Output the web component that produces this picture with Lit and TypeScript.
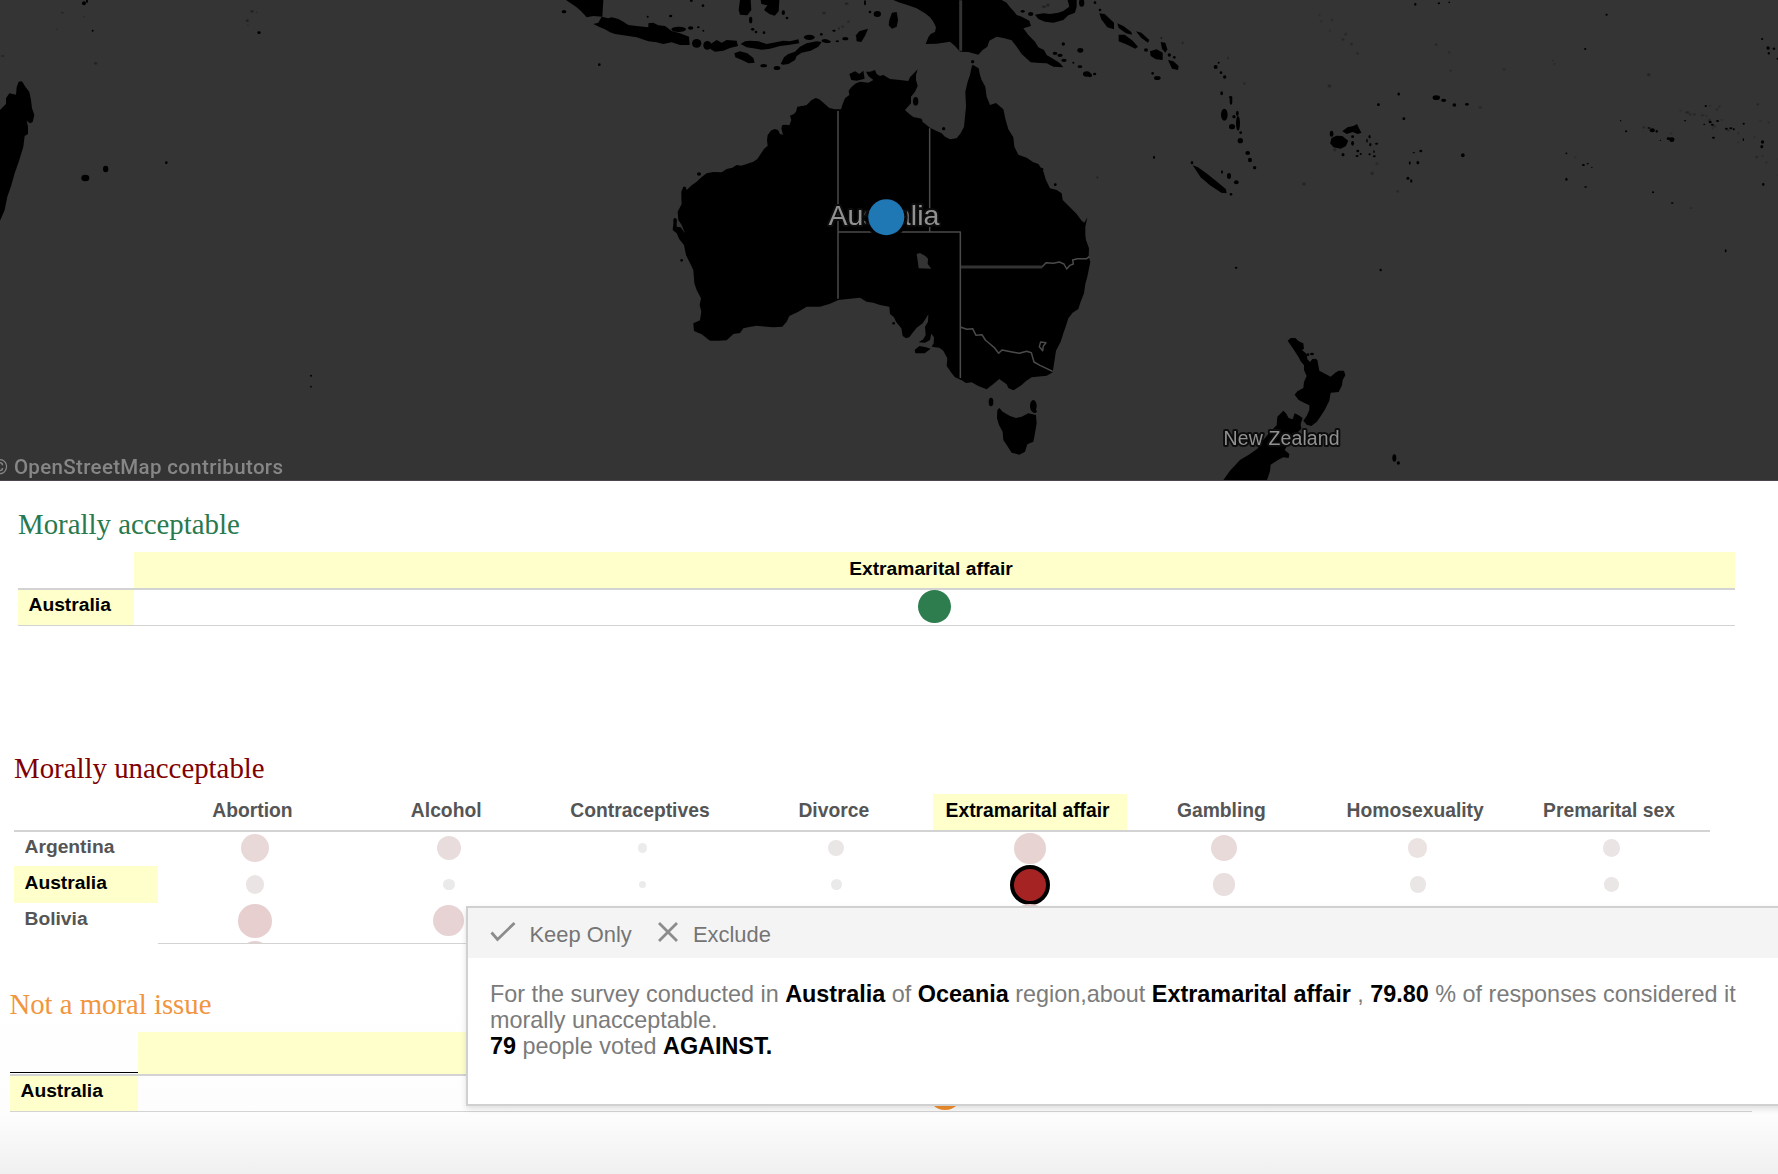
import { LitElement, html, svg, css } from "lit";
import { customElement, property } from "lit/decorators.js";
import { classMap } from "lit/directives/class-map.js";
import { styleMap } from "lit/directives/style-map.js";

/** A run of outline points written relative to its own origin. */
type Run = [dx: number, dy: number, points: string];

/** Joins several runs of points into one closed outline. */
function outline(...runs: Run[]): string {
  const all = runs.flatMap(([dx, dy, points]) =>
    points.split(" ").map((p) => {
      const [x, y] = p.split(",").map(Number);
      return `${x + dx},${y + dy}`;
    })
  );
  return `M${all.join("L")}Z`;
}

/** Islands as "x,y,rx,ry" groups; ry defaults to rx. */
function islands(list: string) {
  return list.split(" ").map((item) => {
    const [x, y, rx, ry = rx] = item.split(",").map(Number);
    return svg`<ellipse cx=${x} cy=${y} rx=${rx} ry=${ry}></ellipse>`;
  });
}

const AUSTRALIA = outline(
  [0, 0,
    "424,575 430,560 437,560 440,570 455,556 470,545 486,530 500,520 520,516 545,517 560,507 577,503 590,495 604,497 640,485 652,477 660,465 672,447 683,437 681,420 683,405 694,391 705,387 714,390 720,402 729,404 724,385 727,375 738,374 748,376 754,360 750,347 762,342 768,335 772,320 785,319 800,315 815,300 827,294 838,298 850,308 868,324 885,328 903,328 908,312 915,295 928,285 926,272 935,260 948,250 960,245 985,248 1000,240 985,228 978,215 990,215 1005,210 1010,222 1020,228 1030,225 1050,237 1080,240 1105,243 1110,232 1133,208 1128,225 1128,240 1133,258 1125,275 1113,290 1113,310 1095,330 1108,342 1120,351 1145,356 1148,366 1170,383"],
  [1080, 0,
    "105,391 125,400 135,410 150,418 170,415 182,400 192,380 195,350 198,320 196,275 203,245 210,225 215,200 218,194 236,205 240,225 245,240 256,260 260,290 270,315 288,309 310,328 317,360 325,388 340,412 343,440 355,464 380,473 400,487 415,492 430,514 437,538 450,565 470,570 485,580 488,600 510,622 530,642 545,662 553,668 562,652 556,680 556,705"],
  [360, 540,
    "1278,180 1287,205 1286,230 1291,245 1282,290 1276,312 1272,340 1262,365 1255,387 1238,398 1225,415 1217,440 1210,460 1202,485 1188,512 1183,545 1178,577 1160,587 1115,592 1098,603 1085,615 1068,626 1060,631 1045,624 1040,613 1027,604 1018,597 1000,612 980,628 955,618 935,607 918,609 905,601 885,592 875,580 860,558 862,535 850,512 838,503 815,500 821,490 822,472 814,461 810,480 795,488 776,487 790,478 797,465 795,440 804,425 805,403 796,418 788,430 770,443 755,462 748,472 738,475 728,468 724,445 708,425 702,412 690,402 688,380 660,375 640,368 620,365 600,353 570,356 535,360 510,371 480,380 440,380 415,395 388,408 380,425 367,440 340,442 320,440 290,437 268,441 250,445 240,459 220,462 200,481 175,482 150,482 125,463 102,453 100,430 120,421 124,395 119,375 123,355 110,330 103,310 100,270 88,245 78,225 72,195 58,178 50,160 38,150 42,115 50,118 50,140 62,142 75,160 65,135 55,120 53,95 65,72 64,50"]
);

const PAPUA = outline([1080, 0,
  "-20,0 0,8 20,14 50,25 75,40 90,52 100,65 108,82 105,96 92,102 85,112 77,132 110,131 150,125 165,138 180,155 205,156 235,164 248,150 262,140 268,122 290,110 310,114 335,121 350,140 365,162 392,187 420,189 440,190 460,200 490,202 480,190 465,180 440,165 432,150 415,142 405,125 385,105 370,85 393,78 388,62 365,50 350,45 340,32 330,22 320,8 305,0"]);

const NEW_BRITAIN = outline([1080, 0,
  "405,44 430,40 450,42 475,38 490,33 508,20 503,0 530,0 530,20 525,38 505,46 490,60 460,68 435,65 415,57"]);

const JAVA = outline([0, 0,
  "160,72 175,68 185,50 205,55 215,52 235,57 250,65 265,75 290,78 325,82 325,70 340,68 355,76 375,78 395,93 420,100 447,110 449,135 420,135 395,127 370,132 350,127 325,124 290,112 265,108 225,102 210,97 195,88 180,82"]);

const SUMATRA = outline([0, 0, "78,0 190,0 187,50 160,48 140,52 125,35 110,22"]);

const FLORES = outline([0, 0,
  "602,132 615,124 630,122 655,124 680,132 700,128 730,122 750,124 775,118 778,130 745,135 720,138 690,146 665,149 640,145 620,142"]);

const TIMOR = outline([0, 0,
  "722,192 732,172 745,162 765,155 780,140 800,130 830,124 845,126 835,140 812,152 785,158 770,168 765,180 745,192 730,194"]);

const SUMBAWA = outline([0, 0,
  "511,133 530,120 545,128 560,120 590,122 594,138 570,144 550,152 525,155 511,147"]);

const TASMANIA = outline([360, 540,
  "1012,690 1018,684 1028,695 1050,708 1068,714 1085,710 1105,700 1128,705 1130,730 1124,765 1120,785 1102,793 1095,815 1078,824 1055,818 1042,798 1030,780 1028,755 1017,735 1011,715"]);

const NORTH_ISLAND =
  "M413,122L422,114L436,114L446,124L460,130L462,146L456,150L470,162L472,178L480,186L488,176L502,180L508,212L522,220L542,230L556,218L566,212L582,212L586,226L578,240L576,256L566,276L542,278L538,302L524,330L510,352L500,366L484,378L470,374L460,362L470,348L478,330L478,316L462,308L446,300L434,284L442,274L460,264L462,246L470,228L462,210L462,196L452,184L446,172L432,150Z";
const SOUTH_ISLAND =
  "M218,543L240,512L270,480L300,462L322,446L340,420L360,396L380,376L382,350L400,332L408,340L416,354L428,358L434,340L446,346L458,354L452,372L454,386L440,400L424,410L416,430L404,450L418,462L416,474L400,472L384,480L362,494L360,514L350,543Z";

const MADAGASCAR =
  "M0,330L18,312L18,295L28,280L48,284L50,262L56,245L66,244L76,260L88,276L93,300L96,325L103,345L98,366L90,370L80,362L84,380L84,402L74,408L70,440L56,486L44,520L34,556L22,590L14,630L0,662Z";

@customElement("region-map")
class RegionMap extends LitElement {
  static styles = css`
    :host {
      display: block;
      height: 481px;
      background: #343434;
    }
    .map {
      display: block;
      width: 1778px;
      height: 481px;
    }
    .land {
      fill: #000;
    }
    .faint {
      fill: #1a1a1a;
      opacity: 0.75;
    }
    .water {
      fill: #343434;
    }
    .line {
      fill: none;
      stroke: #4a4a4a;
      stroke-width: 4.5;
      stroke-linejoin: round;
    }
    .wide {
      stroke: #333;
      stroke-width: 9;
    }
    .label {
      font-family: "Liberation Sans", Arial, sans-serif;
      fill: #919191;
      stroke: #0c0c0c;
      stroke-width: 4px;
      stroke-linejoin: round;
      paint-order: stroke;
    }
    .country {
      font-size: 28.5px;
    }
    .small {
      font-size: 19.5px;
    }
    .credit {
      font: 500 20.5px Roboto, "Open Sans", sans-serif;
      fill: #868686;
    }
    .mark {
      fill: #1f77b4;
      stroke: #000;
      stroke-opacity: 0.9;
      stroke-width: 7;
      paint-order: stroke;
    }
    .base {
      stroke: #4a454a;
      stroke-width: 1;
    }
  `;

  render() {
    return html`<svg class="map" viewBox="0 0 1778 481">
      <g class="land">
        <path transform="scale(.33333)" d=${MADAGASCAR}></path>
        <g transform="scale(.33333)">
          ${islands("256,534,12,10 317,507,8,10 499,488,4 252,10,6,6 261,4,3,5 278,92,3 777,98,5,4 933,1127,3 933,1160,2.5")}
        </g>
        <g transform="translate(540 0) scale(.33333)">
          <path d=${SUMATRA}></path>
          <path d=${JAVA}></path>
          <path d=${SUMBAWA}></path>
          <path d=${FLORES}></path>
          <path d=${TIMOR}></path>
          <path d=${PAPUA}></path>
          <path d=${NEW_BRITAIN}></path>
          <path d=${AUSTRALIA}></path>
          <path d=${TASMANIA}></path>
          <path d="M600,0L632,0L634,30L622,46L600,44L596,30Z"></path>
          <path d="M662,0L718,0L716,34L704,47L688,42L672,30L682,16L664,12Z"></path>
          <path d="M583,160L600,154L622,160L640,174L644,188L626,190L606,180L586,172Z"></path>
          <path d="M948,106L958,94L984,86L976,106L964,126L950,124Z"></path>
          <path d="M1048,60L1056,38L1070,36L1074,60L1070,80L1056,86L1046,76Z"></path>
          <path d="M928,222L945,214L958,222L970,212L974,236L950,242L934,240Z"></path>
          <path d="M1124,1050L1138,1038L1158,1042L1172,1046L1154,1060L1126,1060Z"></path>
          <path d="M1958,496L1974,502L2002,522L2032,546L2058,568L2060,580L2044,578L2010,556L1982,532Z"></path>
          <path d="M1678,40L1694,42L1722,68L1722,88L1702,82L1684,58Z"></path>
          <path d="M1732,70L1750,78L1774,96L1776,104L1758,100L1736,84Z"></path>
          <path d="M1736,104L1754,104L1778,122L1794,140L1786,146L1762,134L1736,124Z"></path>
          <path d="M1788,94L1804,98L1828,120L1824,128L1804,114Z"></path>
          <path d="M1830,154L1850,148L1868,158L1868,180L1848,178L1832,168Z"></path>
          <path d="M1862,126L1876,128L1882,148L1876,158L1866,146Z"></path>
          <path d="M1884,180L1900,184L1916,198L1914,210L1896,206Z"></path>
          ${islands(
            "72,35,7,5 178,194,4 416,88,22,8 452,84,8,5 475,82,4,3 490,92,3 392,48,5,4 323,50,3 454,2,4 489,17,4 470,130,14,13 502,136,12,13 632,60,5,10 638,88,5,4 648,96,4 672,98,4 730,38,5,7 741,54,4 671,197,10,5 711,204,10,6 808,112,16,8 844,103,4 855,122,10,5 862,125,10,4 892,124,5,3 882,92,5,3 916,116,9,5 990,36,4 1012,42,11,9 975,8,3,8 1127,304,8,13 477,522,6,5 405,662,5,8 785,325,5,8 1298,185,5 1546,554,4 1505,508,5 1211,386,5 425,781,4 1061,970,4 1353,1206,7,13 1480,1218,10,18 1484,1234,7,5 1545,554,3 1448,34,6,4 1472,42,8,6 1625,8,8,12 1665,8,4 1680,30,4 1621,151,9,7 1570,132,5 1545,160,7,5 1560,166,8,5 1572,181,8,5 1620,200,7,4 1640,222,11,8 1650,226,6,6 1664,222,5,4 1600,188,3 1852,234,10,6 1838,220,4 1818,150,6,5 1888,165,5 1903,172,4 1864,114,2 2027,201,6 2036,188,3 2043,218,4 2054,231,5 2045,280,4,6 2072,292,5,4 2073,302,4,12 2053,344,10,18 2082,350,5 2092,340,4,8 2094,370,6,22 2076,380,9,8 2101,422,8 2123,459,7,6 2130,480,6,7 2144,503,5 2067,528,6,9 2089,547,7,6 2073,583,4 1956,488,4,5 1842,472,3,5 2046,516,3,5 2102,398,4"
          )}
        </g>
        <g transform="translate(1200 0) scale(.36863 .33333)">
          <path d="M353,430L357,414L370,407L386,408L402,422L396,438L382,446L362,442Z"></path>
          <path d="M386,394L400,382L416,378L426,372L432,386L438,398L428,402L414,396L398,402Z"></path>
          ${islands(
            "357,401,5,9 388,464,4,5 414,410,4 414,430,4,7 428,453,4 426,468,4,3 436,462,3 460,410,3,5 453,422,2,6 462,434,3,5 479,431,4,3 460,463,3 473,469,4,3 472,455,2,4 484,314,4 539,282,3.5,4.5 553,356,4 641,293,10,7 661,301,7,5 690,315,5 724,313,5,4 713,466,5,6 599,453,4 591,488,4,5 569,489,2.5,5 564,535,4,5 573,543,3,5 580,458,3,2 584,13,3,4 648,10,3 676,7,2.5 1103,44,3 1045,147,3 994,460,2.5 994,538,3,4.5 1046,561,4,2.5 1040,495,4,3 1052,491,3,2 1063,502,2 1156,394,3 1141,362,2 1227,391,7,6 1239,394,3,4 1218,384,4,2 1280,419,7,7 1271,416,5,4 1249,421,2 1229,577,3 1281,609,4,2.5 1426,752,2.5,4.5 1541,144,4.5,5 1543,160,3,4 1557,146,3.5 1525,117,3 1567,176,3 1372,318,3 1384,366,4 1390,374,4,3 1404,363,4,3 1368,373,3,2 1316,362,3,2 1428,386,4,3 1440,385,4,3 1448,388,3 1475,371,3,3 1474,419,2,4 1393,413,4,3 1526,426,4.5,5 1524,440,4,5 1528,553,3,5 490,810,3,4 98,803,3.5,3"
          )}
        </g>
        <g transform="translate(1150 300) scale(.33333)">
          <path d=${NORTH_ISLAND}></path>
          <path d=${SOUTH_ISLAND}></path>
          ${islands("486,162,6,4 474,164,4 496,180,4 733,474,6,11 745,489,5")}
        </g>
      </g>
      <g class="faint">
        <g transform="scale(.33333)">
          ${islands("287,190,4 8,168,4,3 187,38,4,2 170,88,2 252,50,2 756,34,4 742,62,4 744,76,2 770,37,2")}
        </g>
        <g transform="translate(540 0) scale(.33333)">
          ${islands("852,39,6,3 920,11,6,3 925,65,4,2 908,80,5,2 897,85,3 1512,20,7,3 1524,15,4 1928,129,3 2064,174,3 2113,250,3 1672,532,3")}
        </g>
        <g transform="translate(1200 0) scale(.36863 .33333)">
          ${islands(
            "324,45,2 358,60,2.5 329,64,2 352,92,2 395,102,3 388,119,3 411,132,3 427,160,3 351,258,4 641,134,3 676,157,2.5 680,212,2.5 760,322,3 825,208,3,2 957,182,2 961,192,2 1217,224,4 1304,332,2 1322,337,5,3 1330,343,4,2 1341,343,3 1363,346,4,2 1374,347,2 1384,317,2 1409,319,2.5 1402,328,3,2 1382,360,3 1416,360,2 1396,379,4,2 1433,391,3 1460,400,2 1460,426,2 1504,411,2 1513,313,3 1520,362,2 1543,367,2 1510,471,3 1526,468,2 1536,487,2 1567,525,1 1567,476,1 1018,471,2 1332,625,3,2 1204,382,3 1278,400,2 282,552,4 467,520,4 480,491,3 536,574,3 366,450,3 1391,385,2 365,448,3"
          )}
        </g>
      </g>
      <g transform="translate(660 180) scale(.33333)">
        <path class="water" d="M770,222L780,219L796,228L804,236L803,252L814,266L776,265L773,242Z"></path>
        <path
          class="line"
          d="M534,-207V356M809,-155V156M534,156H901V594M1146,261L1158,248L1180,250L1198,246L1212,252L1220,267L1230,256L1240,252L1238,240L1252,236L1280,236L1288,230M903,442L920,448L938,446L948,466L966,464L976,480L990,492L1002,502L1016,520L1026,510L1056,516L1078,520L1100,514L1114,518L1122,546L1140,556L1178,574"
        ></path>
        <path class="line wide" d="M903,261H1147"></path>
        <path class="line" d="M1148,512L1138,500L1142,486L1158,488L1150,498Z"></path>
      </g>
      <path class="line wide" transform="translate(900 0) scale(.33333)" d="M182,0V153"></path>
      <text class="label country" x="828.4" y="225" textLength="111">Australia</text>
      <circle class="mark" cx="886.3" cy="217.2" r="18"></circle>
      <text class="label small" x="1223.6" y="444.8" textLength="116">New Zealand</text>
      <text class="credit" x="-8" y="473.8" textLength="291">© OpenStreetMap contributors</text>
      <line class="base" x1="0" y1="480.5" x2="1778" y2="480.5"></line>
    </svg>`;
  }
}

interface Dot {
  r: number;
  color: string;
  selected?: boolean;
}

const dot = (r: number, color: string, selected = false): Dot => ({ r, color, selected });

@customElement("bubble-dot")
class BubbleDot extends LitElement {
  @property({ attribute: false }) dot!: Dot;

  static styles = css`
    :host {
      display: block;
      flex: none;
    }
    .dot {
      border-radius: 50%;
      box-sizing: border-box;
    }
    .selected {
      border: 4.6px solid #000;
    }
  `;

  render() {
    const { r, color, selected } = this.dot;
    return html`<div
      class=${classMap({ dot: true, selected: !!selected })}
      style=${styleMap({ width: `${2 * r}px`, height: `${2 * r}px`, background: color })}
    ></div>`;
  }
}

const TOPICS = [
  "Abortion",
  "Alcohol",
  "Contraceptives",
  "Divorce",
  "Extramarital affair",
  "Gambling",
  "Homosexuality",
  "Premarital sex",
];

const ROWS: { name: string; dots: Dot[] }[] = [
  {
    name: "Argentina",
    dots: [
      dot(14, "#e8d8d8"), dot(12, "#e8dcdc"), dot(4.8, "#ebebeb"), dot(7.9, "#ebe6e6"),
      dot(15.6, "#e8d3d3"), dot(13, "#e9dada"), dot(9.7, "#ebe2e2"), dot(8.7, "#ebe4e4"),
    ],
  },
  {
    name: "Australia",
    dots: [
      dot(9.3, "#ebe4e4"), dot(5.9, "#eaeaea"), dot(3.8, "#ebebeb"), dot(5.6, "#eaeaea"),
      dot(20, "#a52323", true), dot(11.1, "#e9dfdf"), dot(8.1, "#ebe6e6"), dot(7.3, "#ebe6e6"),
    ],
  },
  {
    name: "Bolivia",
    dots: [
      dot(16.7, "#e7cfd0"), dot(15.4, "#e7d3d4"), dot(5, "#ebebeb"), dot(7, "#ebe6e6"),
      dot(16.6, "#e7cfd0"), dot(12, "#e8dcdc"), dot(12, "#e8dcdc"), dot(9, "#ebe4e4"),
    ],
  },
];

@customElement("app-root")
class AppRoot extends LitElement {
  static styles = css`
    :host {
      display: block;
      position: relative;
      width: 1778px;
      height: 1174px;
      overflow: hidden;
      background: linear-gradient(#fff 0, #fff 1000px, #fdfdfd 1115px, #f0f0f0 1174px);
      font-family: "Liberation Sans", Arial, sans-serif;
      color: #000;
    }
    .title {
      margin: 0;
      font: 400 28.85px/34px "Liberation Serif", "Times New Roman", serif;
      white-space: nowrap;
    }
    .green {
      color: #28794d;
    }
    .red {
      color: #800000;
    }
    .orange {
      color: #f1953f;
      margin-left: -0.6px;
      font-size: 28.75px;
    }
    .accept {
      padding: 26px 43px 0 18px;
    }
    .reject {
      padding: 125px 68px 0 14px;
    }
    .neutral {
      padding: 43px 26px 0 10px;
    }
    .grid {
      display: grid;
      font-size: 19.25px;
      font-weight: 700;
    }
    .accept .grid {
      margin-top: 11px;
      grid-template: 36px 38px / 116px 1fr;
    }
    .neutral .grid {
      margin-top: 11px;
      grid-template: 42px 38px / 128px 1fr;
    }
    .cell {
      display: flex;
      align-items: center;
      box-sizing: border-box;
      white-space: nowrap;
    }
    .hit {
      background: #ffffcb;
      color: #000;
    }
    .head {
      justify-content: center;
      padding-bottom: 2px;
    }
    .accept .head {
      padding-right: 7px;
    }
    .ruled {
      border-top: 2px solid #d3d3d3;
      border-bottom: 1px solid #d3d3d3;
    }
    .accept .name {
      padding: 0 0 6px 10.5px;
    }
    .neutral .name {
      padding: 0 0 5px 10.5px;
    }
    .corner {
      border-bottom: 1px solid #000;
      margin-bottom: 1px;
    }
    .plot {
      justify-content: center;
      overflow: hidden;
    }
    .accept .plot {
      padding-bottom: 2px;
    }
    .neutral .plot {
      padding-bottom: 1px;
    }
    .topics {
      display: grid;
      margin-top: 9px;
      height: 36px;
      padding-left: 144px;
      grid-template-columns: repeat(8, 193.8px);
      font-size: 19.3px;
      font-weight: 700;
      color: #555;
    }
    .topics .head {
      padding-right: 5px;
    }
    .rows {
      box-sizing: border-box;
      height: 113px;
      overflow: hidden;
      background: linear-gradient(#d3d3d3, #d3d3d3) 0 0 / 100% 2px no-repeat;
    }
    .row {
      display: grid;
      grid-template: 36.35px / 144px repeat(8, 193.8px);
      font-size: 19.25px;
      font-weight: 700;
      color: #555;
    }
    .row .name {
      padding: 0 0 3px 10.5px;
    }
    .row .mark {
      justify-content: center;
    }
    .next {
      display: grid;
      grid-template-columns: repeat(8, 193.8px);
      margin-left: 144px;
      justify-items: center;
      padding-top: 2px;
    }
    .edge {
      height: 1px;
      margin-left: 144px;
      background: #d3d3d3;
    }
    .tip {
      position: absolute;
      left: 466px;
      top: 906px;
      width: 1330px;
      height: 200px;
      box-sizing: border-box;
      border: 2px solid #d0d0d0;
      background: #fff;
      box-shadow: 0 3px 6px rgba(0, 0, 0, 0.12);
      color: #7b7b7b;
    }
    .actions {
      display: flex;
      align-items: center;
      height: 50px;
      padding-left: 22px;
      background: #f4f4f4;
      font-size: 21.9px;
      color: #757575;
      box-sizing: border-box;
    }
    .action {
      display: flex;
      align-items: center;
      padding-top: 3px;
      white-space: nowrap;
    }
    .icon {
      fill: none;
      stroke: #8c8c8c;
      stroke-width: 2.8;
      margin-top: -6px;
    }
    .keep {
      gap: 13.5px;
      width: 167px;
    }
    .drop {
      gap: 14px;
    }
    .message {
      margin: 0;
      padding: 22.6px 0 0 22px;
      font-size: 23.4px;
      line-height: 26px;
      white-space: nowrap;
    }
    .message b {
      color: #000;
    }
  `;

  render() {
    return html`
      <region-map></region-map>

      <section class="accept">
        <h2 class="title green">Morally acceptable</h2>
        <div class="grid">
          <div class="cell"></div>
          <div class="cell head hit">Extramarital affair</div>
          <div class="cell name hit ruled">Australia</div>
          <div class="cell plot ruled"><bubble-dot .dot=${dot(16.7, "#2e7d4e")}></bubble-dot></div>
        </div>
      </section>

      <section class="reject">
        <h2 class="title red">Morally unacceptable</h2>
        <div class="topics">
          ${TOPICS.map(
            (topic) => html`<div class=${classMap({ cell: true, head: true, hit: topic === "Extramarital affair" })}>${topic}</div>`
          )}
        </div>
        <div class="rows">
          ${ROWS.map(
            (row) => html`<div class="row">
              <div class=${classMap({ cell: true, name: true, hit: row.name === "Australia" })}>${row.name}</div>
              ${row.dots.map((d) => html`<div class="cell mark"><bubble-dot .dot=${d}></bubble-dot></div>`)}
            </div>`
          )}
          <div class="next"><bubble-dot .dot=${dot(16, "#e7cfd0")}></bubble-dot></div>
        </div>
        <div class="edge"></div>
      </section>

      <section class="neutral">
        <h2 class="title orange">Not a moral issue</h2>
        <div class="grid">
          <div class="cell corner"></div>
          <div class="cell head hit"></div>
          <div class="cell name hit ruled">Australia</div>
          <div class="cell plot ruled"><bubble-dot .dot=${dot(16.7, "#f5912d")}></bubble-dot></div>
        </div>
      </section>

      <aside class="tip">
        <div class="actions">
          <div class="action keep">
            <svg class="icon" width="26" height="20" viewBox="0 0 26 20"><path d="M1.5 10.5L7.5 17.5L24.5 1"></path></svg>
            <span>Keep Only</span>
          </div>
          <div class="action drop">
            <svg class="icon" width="22" height="20" viewBox="0 0 22 20"><path d="M2 1L20 19M20 1L2 19"></path></svg>
            <span>Exclude</span>
          </div>
        </div>
        <p class="message">
          For the survey conducted in <b>Australia</b> of <b>Oceania</b> region,about <b>Extramarital affair</b> ,
          <b>79.80</b> % of responses considered it<br />morally unacceptable.<br /><b>79</b> people voted
          <b>AGAINST.</b>
        </p>
      </aside>
    `;
  }
}
